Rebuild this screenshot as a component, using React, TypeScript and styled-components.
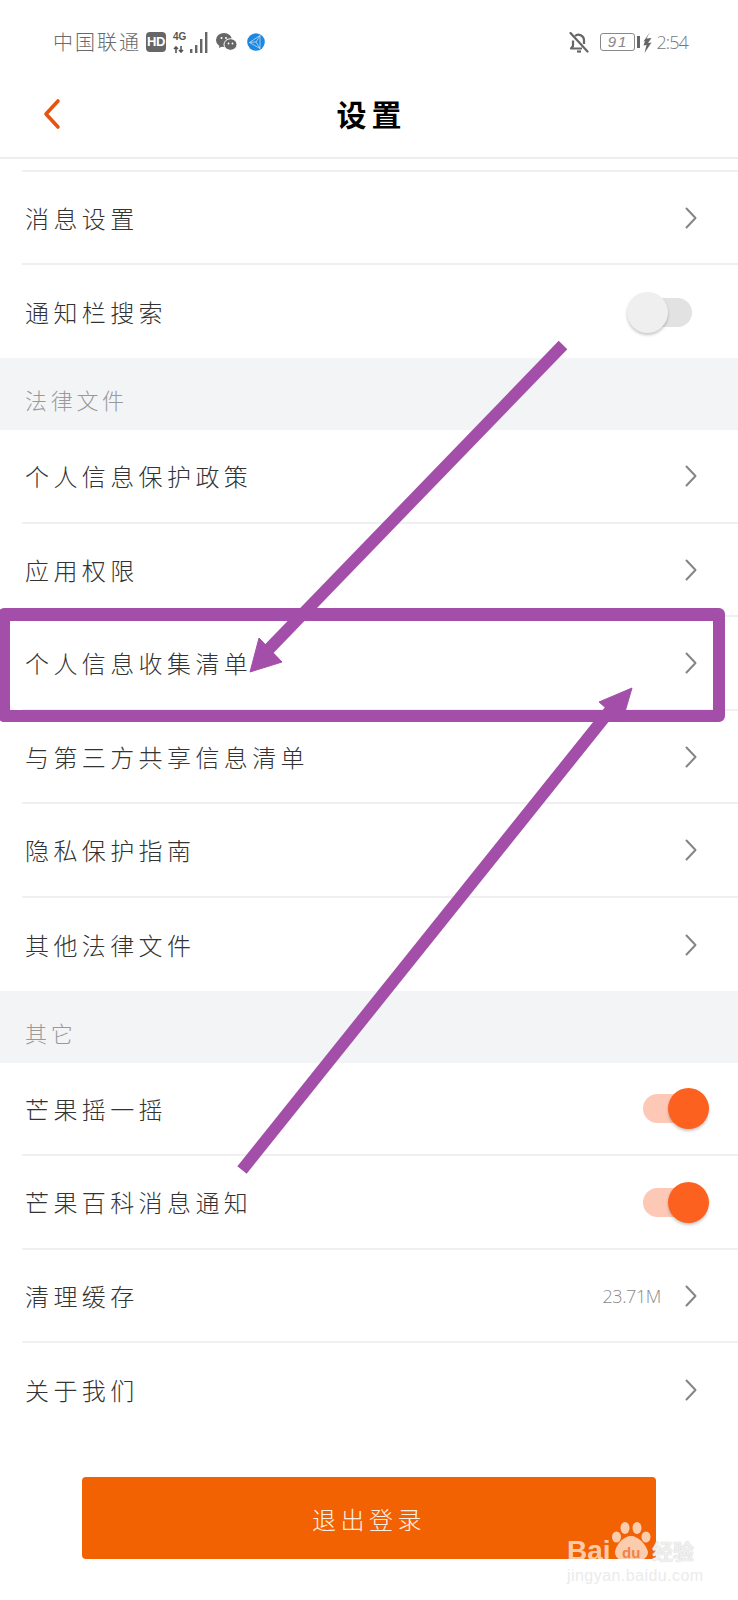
import React from "react";
import styled, { createGlobalStyle } from "styled-components";

const Global = createGlobalStyle`
  html, body { margin: 0; padding: 0; background: #fff; }
  body { font-family: "Noto Sans CJK SC", "Liberation Sans", sans-serif; }
  * { box-sizing: border-box; }
`;

const Page = styled.div`
  position: relative;
  width: 738px;
  height: 1600px;
  overflow: hidden;
  background: #fff;
`;

const StatusBar = styled.div`
  height: 80px;
  padding: 30px 50px 0 53px;
  display: flex;
  align-items: flex-start;
  justify-content: space-between;
  color: #666;
`;
const StatusGroup = styled.div`
  display: flex;
  align-items: center;
  height: 24px;
`;
const Carrier = styled.span`
  font-size: 20px;
  font-weight: 300;
  letter-spacing: 2px;
  line-height: 24px;
  color: #6a6a6a;
  margin-right: 5px;
`;
const HdBadge = styled.span`
  width: 20px;
  height: 20px;
  border-radius: 4px;
  background: #666;
  color: #fff;
  font: 700 13px/20px "Liberation Sans", sans-serif;
  letter-spacing: -0.5px;
  text-align: center;
  margin-right: 7px;
`;
const NetStack = styled.span`
  display: flex;
  flex-direction: column;
  width: 15px;
  height: 21px;
  justify-content: space-between;
  margin-right: 2px;
  font: 700 10px/10px "Liberation Sans", sans-serif;
  color: #555;
`;
const BatteryBox = styled.span`
  width: 35px;
  height: 18px;
  border: 1px solid #888;
  border-radius: 3px;
  font: italic 300 15px/16px "Liberation Sans", sans-serif;
  letter-spacing: 2px;
  text-align: center;
  color: #888;
  margin: 0 2px 0 11px;
`;
const BatteryNub = styled.span`
  width: 3px;
  height: 12px;
  background: #666;
  margin-right: 3px;
`;
const Clock = styled.span`
  font: 300 18px/24px "Open Sans", sans-serif;
  letter-spacing: -0.9px;
  color: #777;
  margin-left: 4px;
`;

const Header = styled.div`
  height: 79px;
  padding-bottom: 11px;
  border-bottom: 2px solid #eeeeee;
  display: flex;
  align-items: center;
  justify-content: center;
  position: relative;
`;
const BackIcon = styled.svg`
  position: absolute;
  left: 42px;
  top: 18px;
`;
const Title = styled.h1`
  margin: 0;
  padding-left: 5px;
  font-size: 30px;
  font-weight: 700;
  letter-spacing: 5px;
  color: #000;
  line-height: 40px;
`;

const Group = styled.div<{ $first?: boolean }>`
  margin-top: ${(p) => (p.$first ? "11px" : "0")};
  padding-left: 22px;
`;
const GroupRule = styled.div`
  height: 2px;
  background: #f0f0f0;
`;
const Row = styled.div<{ $last?: boolean; $height: number }>`
  height: ${(p) => p.$height}px;
  display: flex;
  align-items: center;
  justify-content: space-between;
  padding: 1px 41px 0 3px;
  border-bottom: ${(p) => (p.$last ? "none" : "2px solid #f0f0f0")};
`;
const RowLabel = styled.span`
  font-size: 24px;
  font-weight: 300;
  letter-spacing: 4.4px;
  line-height: 34px;
  color: #333;
`;
const RowRight = styled.span`
  display: flex;
  align-items: center;
  gap: 24px;
`;
const RowValue = styled.span`
  font: 300 18px/24px "Open Sans", sans-serif;
  letter-spacing: -0.4px;
  color: #8a8a8a;
`;

const SectionHead = styled.div<{ $height: number }>`
  height: ${(p) => p.$height}px;
  background: #f3f4f6;
  padding: 25px 0 0 25px;
  font-size: 22px;
  font-weight: 300;
  letter-spacing: 3.7px;
  line-height: 32px;
  color: #999;
`;

const Track = styled.span<{ $on: boolean }>`
  position: relative;
  display: block;
  width: 49px;
  height: 29px;
  border-radius: 15px;
  margin-right: 5px;
  background: ${(p) => (p.$on ? "#fdc9b6" : "#e2e2e2")};
`;
const Knob = styled.span<{ $on: boolean }>`
  position: absolute;
  top: -6px;
  left: ${(p) => (p.$on ? "25px" : "-16px")};
  width: 41px;
  height: 41px;
  border-radius: 50%;
  background: ${(p) => (p.$on ? "#fd6120" : "#efefef")};
  box-shadow: 0 2px 3px rgba(0, 0, 0, 0.22);
`;

const LogoutWrap = styled.div`
  padding: 40.5px 82px 0;
`;
const Logout = styled.div`
  height: 82px;
  border-radius: 4px;
  background: #f26202;
  color: #fff0e4;
  font-size: 24px;
  font-weight: 300;
  letter-spacing: 4.5px;
  display: flex;
  align-items: center;
  justify-content: center;
`;

const Highlight = styled.div`
  position: absolute;
  left: -2px;
  top: 608px;
  width: 727px;
  height: 114px;
  border: 12px solid #a34fa9;
  border-top-width: 13px;
  border-radius: 6px;
`;
const Annotations = styled.svg`
  position: absolute;
  left: 0;
  top: 0;
`;

const Watermark = styled.div`
  position: absolute;
  left: 567px;
  top: 1520px;
  width: 134px;
  height: 66px;
`;
const WmPaw = styled.svg`
  position: absolute;
  left: 45px;
  top: 1px;
`;
const WmBai = styled.span`
  position: absolute;
  left: 0;
  top: 15px;
  font: 700 28px/32px "Liberation Sans", sans-serif;
  color: rgba(255, 255, 255, 0.68);
`;
const WmDu = styled.span`
  position: absolute;
  left: 55px;
  top: 25px;
  font: 700 15px/16px "Liberation Sans", sans-serif;
  color: #f0824a;
`;
const WmJy = styled.span`
  position: absolute;
  left: 85px;
  top: 17px;
  font-size: 21px;
  font-weight: 700;
  line-height: 26px;
  color: rgba(255, 255, 255, 0.8);
  text-shadow: 0 0 1px rgba(170, 170, 170, 0.9);
`;
const WmUrl = styled.span`
  position: absolute;
  left: 0;
  top: 46px;
  font: 400 16px/20px "Liberation Sans", sans-serif;
  letter-spacing: 0.45px;
  color: #ebebeb;
  white-space: nowrap;
`;

const Chevron = () => (
  <svg width="12" height="22" viewBox="0 0 12 22" fill="none">
    <path d="M1.5 1.5 L10.5 11 L1.5 20.5" stroke="#858585" strokeWidth="2" strokeLinecap="round" strokeLinejoin="round" />
  </svg>
);

const Toggle = ({ on }: { on: boolean }) => (
  <Track $on={on}>
    <Knob $on={on} />
  </Track>
);

type Item = { label: string; on?: boolean; value?: string };

const RowList = ({ items, height }: { items: Item[]; height: number }) => (
  <>
    {items.map((it, i) => (
      <Row key={it.label} $height={height} $last={i === items.length - 1}>
        <RowLabel>{it.label}</RowLabel>
        <RowRight>
          {it.value && <RowValue>{it.value}</RowValue>}
          {it.on === undefined ? <Chevron /> : <Toggle on={it.on} />}
        </RowRight>
      </Row>
    ))}
  </>
);

const groupA: Item[] = [{ label: "消息设置" }, { label: "通知栏搜索", on: false }];
const groupB: Item[] = [
  { label: "个人信息保护政策" },
  { label: "应用权限" },
  { label: "个人信息收集清单" },
  { label: "与第三方共享信息清单" },
  { label: "隐私保护指南" },
  { label: "其他法律文件" },
];
const groupC: Item[] = [
  { label: "芒果摇一摇", on: true },
  { label: "芒果百科消息通知", on: true },
  { label: "清理缓存", value: "23.71M" },
  { label: "关于我们" },
];

export default function App() {
  return (
    <Page>
      <Global />
      <StatusBar>
        <StatusGroup>
          <Carrier>中国联通</Carrier>
          <HdBadge>HD</HdBadge>
          <NetStack>
            4G
            <svg width="14" height="7" viewBox="0 0 14 7" fill="none" stroke="#555" strokeWidth="1.6">
              <path d="M3 7 V1 M1 3 L3 1 L5 3 M8 0 V6 M6 4 L8 6 L10 4" />
            </svg>
          </NetStack>
          <svg width="18" height="21" viewBox="0 0 18 21" style={{ marginRight: 8 }}>
            <g fill="#666">
              <rect x="0" y="17" width="2.4" height="4" />
              <rect x="5" y="13" width="2.4" height="8" />
              <rect x="10" y="7" width="2.4" height="14" />
              <rect x="15" y="0" width="2.4" height="21" />
            </g>
          </svg>
          <svg width="21" height="20" viewBox="0 0 21 20" style={{ marginRight: 10 }}>
            <ellipse cx="8" cy="8" rx="8" ry="7" fill="#666" />
            <path d="M3.5 12 L3 16 L7 14 Z" fill="#666" />
            <ellipse cx="14.5" cy="12.5" rx="6.5" ry="5.8" fill="#666" stroke="#fff" strokeWidth="1" />
            <circle cx="5.5" cy="6" r="1" fill="#fff" />
            <circle cx="10" cy="6" r="1" fill="#fff" />
            <circle cx="12.5" cy="11.5" r="0.9" fill="#fff" />
            <circle cx="16.5" cy="11.5" r="0.9" fill="#fff" />
          </svg>
          <svg width="18" height="18" viewBox="0 0 18 18">
            <circle cx="9" cy="9" r="8.8" fill="#1e88e0" />
            <path d="M13 2.5 L2.5 9.5 L13 15.5 Z M13 2.5 L9 9 L13 15.5 M2.5 9.5 L9 9" stroke="#cfe7fa" strokeWidth="0.7" fill="none" />
          </svg>
        </StatusGroup>
        <StatusGroup>
          <svg width="20" height="21" viewBox="0 0 20 21" fill="none" stroke="#666" strokeWidth="2.2">
            <path d="M4 8.5 V14 L2 16.5 H13 M6 4 a5.5 5.5 0 0 1 9 4 V12" strokeLinejoin="round" />
            <path d="M8 19.5 h4" />
            <path d="M1.5 1 L18.5 19.5" strokeLinecap="round" />
          </svg>
          <BatteryBox>91</BatteryBox>
          <BatteryNub />
          <svg width="9" height="21" viewBox="0 0 9 21">
            <path d="M7 0 L3.5 6.5 L8.5 6 L5 11 L8.5 10.5 L1.5 21 L3.5 13 L0.5 13.5 L2 9 L0.5 9.5 Z" fill="#666" />
          </svg>
          <Clock>2:54</Clock>
        </StatusGroup>
      </StatusBar>
      <Header>
        <BackIcon width="20" height="32" viewBox="0 0 20 32" fill="none">
          <path d="M16 3 L4 16 L16 29" stroke="#e8520f" strokeWidth="3.6" strokeLinecap="round" strokeLinejoin="round" />
        </BackIcon>
        <Title>设置</Title>
      </Header>

      <Group $first>
        <GroupRule />
        <RowList items={groupA} height={93} />
      </Group>
      <SectionHead $height={72}>法律文件</SectionHead>
      <Group>
        <RowList items={groupB} height={93.5} />
      </Group>
      <SectionHead $height={71.5}>其它</SectionHead>
      <Group>
        <RowList items={groupC} height={93.5} />
      </Group>
      <LogoutWrap>
        <Logout>退出登录</Logout>
      </LogoutWrap>

      <Highlight />
      <Annotations width="738" height="1600" viewBox="0 0 738 1600">
        <g fill="#a34fa9" stroke="#a34fa9">
          <path d="M563 345 L268 650" strokeWidth="12" />
          <path d="M250 672 L282 662 L259 638 Z" strokeWidth="1" />
          <path d="M242 1170 L612 708" strokeWidth="12" />
          <path d="M632 688 L599 702 L622 722 Z" strokeWidth="1" />
        </g>
      </Annotations>

      <Watermark>
        <WmPaw width="40" height="42" viewBox="0 0 40 42">
          <g fill="#ffffff" fillOpacity="0.68">
            <ellipse cx="13" cy="7" rx="4.5" ry="6" />
            <ellipse cx="25" cy="7" rx="4.5" ry="6" />
            <ellipse cx="4.5" cy="16" rx="4.5" ry="5.5" />
            <ellipse cx="34" cy="16" rx="4.5" ry="5.5" />
            <path d="M19 15 C12 15 4 23 3 31 C3 38 10 41 19 41 C28 41 36 38 36 31 C34 23 26 15 19 15 Z" />
          </g>
        </WmPaw>
        <WmBai>Bai</WmBai>
        <WmDu>du</WmDu>
        <WmJy>经验</WmJy>
        <WmUrl>jingyan.baidu.com</WmUrl>
      </Watermark>
    </Page>
  );
}
